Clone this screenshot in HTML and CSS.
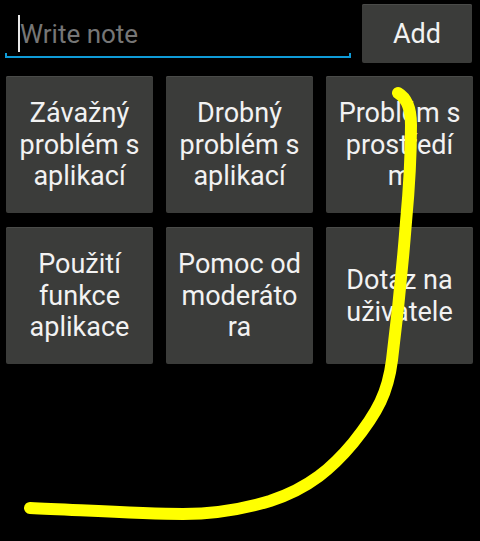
FILE: index.html
```html
<!DOCTYPE html>
<html lang="cs">
<head>
<meta charset="utf-8">
<title>Notes</title>
<link rel="stylesheet" href="styles.css">
</head>
<body>
<div class="screen">
  <div class="top">
    <div class="note">
      <div class="field">
        <span class="cursor"></span>
        <span class="placeholder">Write note</span>
      </div>
      <div class="underline"></div>
    </div>
    <button class="add">Add</button>
  </div>
  <div class="grid">
    <button class="tile">Závažný<br>problém s<br>aplikací</button>
    <button class="tile">Drobný<br>problém s<br>aplikací</button>
    <button class="tile">Problém s<br>prostředí<br>m</button>
    <button class="tile">Použití<br>funkce<br>aplikace</button>
    <button class="tile">Pomoc od<br>moderáto<br>ra</button>
    <button class="tile">Dotaz na<br>uživatele</button>
  </div>
  <svg class="stroke" width="480" height="541" viewBox="0 0 480 541">
    <path d="M398,93 C405,97 411,107 411,125 C411,150 409,190 406,222 C403,260 397,320 392,360 C388,392 378,412 353,443 C333,467 310,488 270,501 C240,510 210,514 183,514 C140,514 80,510 30,508" fill="none" stroke="#ffff00" stroke-width="12" stroke-linecap="round" stroke-linejoin="round"/>
  </svg>
</div>
</body>
</html>
```
FILE: styles.css
```css
html, body {
  margin: 0;
  padding: 0;
  background: #000;
}
body {
  font-family: Roboto, "Noto Sans", sans-serif;
}
.screen {
  position: relative;
  width: 480px;
  height: 541px;
  overflow: hidden;
  background: #000;
}
.top {
  display: flex;
  align-items: flex-start;
  gap: 11px;
  padding: 4px 8px 0 5px;
  height: 63px;
  box-sizing: border-box;
}
.note {
  width: 346px;
  display: flex;
  flex-direction: column;
}
.field {
  height: 49px;
  display: flex;
  align-items: flex-start;
  padding-left: 13px;
}
.cursor {
  width: 2px;
  height: 37px;
  margin-top: 11px;
  background: #e8e8e8;
}
.placeholder {
  margin-top: 15px;
  font-size: 26px;
  line-height: 30px;
  color: #767676;
}
.underline {
  height: 3px;
  border: solid #0f9bd7;
  border-width: 0 2px 2px 2px;
}
.add {
  width: 110px;
  height: 59px;
  border: 0;
  border-radius: 2px;
  background: #3b3c3a;
  box-shadow: inset 0 1px 0 #4a4b49;
  color: #f2f2f2;
  font-family: Roboto, "Noto Sans", sans-serif;
  font-size: 27px;
  padding: 0;
}
.grid {
  display: grid;
  grid-template-columns: repeat(3, 147px);
  grid-auto-rows: 137px;
  column-gap: 13px;
  row-gap: 14px;
  padding: 13px 8px 0 6px;
}
.tile {
  border: 0;
  border-radius: 2px;
  background: #3b3c3a;
  box-shadow: inset 0 1px 0 #4a4b49;
  color: #f2f2f2;
  font-family: Roboto, "Noto Sans", sans-serif;
  font-size: 27px;
  line-height: 31.7px;
  text-align: center;
  white-space: nowrap;
  padding: 2px 0 0 0;
}
.stroke {
  position: absolute;
  left: 0;
  top: 0;
  pointer-events: none;
}
```
